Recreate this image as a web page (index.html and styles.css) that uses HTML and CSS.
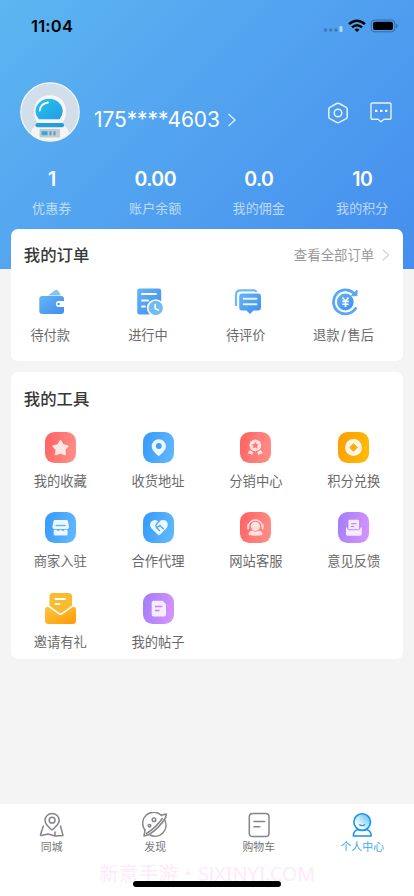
FILE: index.html
```html
<!DOCTYPE html>
<html lang="zh-CN">
<head>
<meta charset="utf-8">
<meta name="viewport" content="width=device-width, initial-scale=1">
<title>个人中心</title>
<link rel="stylesheet" href="styles.css">
</head>
<body>
<svg class="defs" width="0" height="0" aria-hidden="true">
  <defs>
    <linearGradient id="blue" x1="0" y1="0" x2="1" y2="0.25"><stop offset="0" stop-color="#349afd"/><stop offset="1" stop-color="#5cb5ff"/></linearGradient>
    <linearGradient id="red" x1="0" y1="0" x2="1" y2="0.25"><stop offset="0" stop-color="#ff6161"/><stop offset="1" stop-color="#ff8b84"/></linearGradient>
    <linearGradient id="orange" x1="0" y1="0" x2="1" y2="0.25"><stop offset="0" stop-color="#fc9d02"/><stop offset="1" stop-color="#ffb905"/></linearGradient>
    <linearGradient id="purple" x1="0" y1="0" x2="1" y2="0.25"><stop offset="0" stop-color="#a27cf8"/><stop offset="1" stop-color="#d191ff"/></linearGradient>
    <linearGradient id="mail" x1="0" y1="0" x2="1" y2="1"><stop offset="0" stop-color="#fdc745"/><stop offset="1" stop-color="#ff9a05"/></linearGradient>
    <linearGradient id="order" x1="0" y1="0" x2="1" y2="1"><stop offset="0" stop-color="#65b5f3"/><stop offset="1" stop-color="#408df0"/></linearGradient>
    <linearGradient id="visor" x1="0" y1="0" x2="1" y2="1"><stop offset="0" stop-color="#20c5ee"/><stop offset="1" stop-color="#279ce3"/></linearGradient>
    <linearGradient id="face" x1="1" y1="0" x2="0" y2="1"><stop offset="0.1" stop-color="#65c2fa"/><stop offset="0.75" stop-color="#fff"/></linearGradient>
    <clipPath id="round"><circle cx="30" cy="30" r="29"/></clipPath>
  </defs>
</svg>
<div class="screen">
  <header class="header">
    <div class="status">
      <span class="time">11:04</span>
      <svg width="76" height="16" viewBox="0 0 76 16">
        <g fill="#3f79ad"><circle cx="3.5" cy="12" r="1.7"/><circle cx="8.7" cy="12" r="1.7"/><circle cx="13.9" cy="12" r="1.7"/></g>
        <rect x="17.5" y="8" width="3" height="6" rx="1" fill="#b5dafa"/>
        <g fill="none" stroke="#000" stroke-width="2.5"><path d="M27.1 6.1Q35 -.7 42.9 6.1"/><path d="M30 9.4Q35 5.1 40 9.4"/></g>
        <path d="M32.5 11.6Q35 9.5 37.5 11.6L35 14.1Z"/>
        <rect x="49.2" y="2" width="23.6" height="11.8" rx="3.4" fill="none" stroke="#326ca6"/>
        <rect x="51" y="3.8" width="20" height="8.2" rx="2"/>
        <path d="M74 6v4q1.8-.5 1.8-2T74 6Z" fill="#326ca6"/>
      </svg>
    </div>
    <div class="profile">
      <svg class="avatar" width="60" height="60" viewBox="0 0 60 60">
        <circle cx="30" cy="30" r="29.2" fill="#d2dfea" stroke="#f5f9fc" stroke-width="1.2"/>
        <g clip-path="url(#round)">
          <path d="M11 60V52Q11 44 19 43H41Q49 44 49 52V60Z" fill="#f4f4f4"/>
          <path d="M18.500 42Q14 37 14 29.500C14 19.500 21 13.300 30 13.300S46 19.500 46 29.500Q46 37 41.500 42Z" fill="#f7f7f7"/>
          <path d="M18.800 37.300Q15.500 33.500 15.500 29.500A13.600 12.800 0 0 1 42.700 29.500Q42.700 33.500 39.500 37.300Z" fill="url(#visor)"/>
          <path d="M19.800 28.500Q20.500 21.500 28 20.500" fill="none" stroke="#fff" stroke-width="1.800" stroke-linecap="round"/>
          <rect x="15.500" y="41" width="28.500" height="4.200" rx="2" fill="#279ed8"/>
          <rect x="19.500" y="47" width="20.500" height="8.500" rx="1" fill="#c9c9cb"/>
          <path d="M21.500 49.200h6v4h-6zM29.500 49.200h2v4h-2zM33.500 49.200h2v4h-2z" fill="#35a6de"/>
        </g>
      </svg>
      <span class="phone">175****4603</span>
      <svg class="more" width="8" height="14" viewBox="0 0 8 14" fill="none" stroke="#e8f3ff" stroke-width="1.200"><path d="M.6 1 7 7 .6 13"/></svg>
      <div class="actions">
        <svg width="22" height="24" viewBox="0 0 22 24" fill="none" stroke="#e5f2ff" stroke-width="1.500" stroke-linejoin="round"><path d="M9.700 2.500Q11 1.800 12.300 2.500L19.200 6.300Q20.200 6.900 20.200 8V16Q20.200 17 19.200 17.600L12.300 21.400Q11 22.100 9.700 21.400L2.800 17.600Q1.800 17 1.800 16V8Q1.800 6.900 2.800 6.300Z"/><circle cx="11" cy="12" r="3.800"/></svg>
        <svg width="22" height="24" viewBox="0 0 22 24" fill="none" stroke="#e5f2ff" stroke-width="1.400" stroke-linejoin="round"><path d="M2.200 2H19.800Q21 2 21 3.200V17Q21 18.200 19.800 18.200H14L11 20.800 8 18.200H2.200Q1 18.200 1 17V3.200Q1 2 2.200 2Z"/><path d="M5 8.700h2.400v2.400H5zM10 8.700h2.400v2.400H10zM15 8.700h2.400v2.400H15z" fill="#f5faff" stroke="none"/></svg>
      </div>
    </div>
    <div class="stats">
      <div class="stat"><b>1</b><span>优惠券</span></div>
      <div class="stat"><b>0.00</b><span>账户余额</span></div>
      <div class="stat"><b>0.0</b><span>我的佣金</span></div>
      <div class="stat"><b>10</b><span>我的积分</span></div>
    </div>
  </header>
  <main class="cards">
    <section class="card orders">
      <div class="card-head">
        <h2>我的订单</h2>
        <a class="all">查看全部订单 <svg width="8" height="12" viewBox="0 0 8 12" fill="none" stroke="#b9b9b9" stroke-width="1"><path d="M.8.700 6.800 6 .8 11.300"/></svg></a>
      </div>
      <div class="order-grid">
        <div class="order">
          <svg width="28" height="28" viewBox="0 0 28 28"><path d="M10 7.500 17 2.300Q18.700 1.200 20 2.800L22.500 6.500V7.500Z" fill="#85c3f6"/><path d="M4.500 8H23Q26 8 26 11V13H20Q17.800 13.300 17.800 16T20 19H26V23Q26 26 23 26H4.500Q1.300 26 1.300 23V11Q1.300 8 4.500 8Z" fill="url(#order)"/><path d="M26.500 14.200H20.500Q18.500 14.200 18.500 16T20.500 17.800H26.500Z" fill="#fff"/><circle cx="20.600" cy="16" r="1.200" fill="#499bf1"/></svg>
          <span>待付款</span>
        </div>
        <div class="order">
          <svg width="28" height="28" viewBox="0 0 28 28"><rect x="1.200" y=".5" width="24" height="26" rx="2.500" fill="url(#order)"/><path d="M6 6H20M6 12.500H12M6 18.500H9" stroke="#fff" stroke-width="1.800" stroke-linecap="round"/><circle cx="19.700" cy="20" r="8.800" fill="#fff"/><circle cx="19.700" cy="20" r="7.200" fill="#70bcf6"/><path d="M19.200 16.500V20.700L22.500 22" fill="none" stroke="#fff" stroke-width="1.600" stroke-linecap="round"/></svg>
          <span>进行中</span>
        </div>
        <div class="order">
          <svg width="28" height="28" viewBox="0 0 28 28"><path d="M2 18V7Q2 2.300 7 2.300H20Q22 2.500 22.500 4" fill="none" stroke="#6cb9f4" stroke-width="2.200"/><path d="M8 5.500H24Q27 5.500 27 8.500V19.500Q27 22.500 24 22.500H19.500L16 26 12.500 22.500H8Q5.200 22.500 5.200 19.500V8.500Q5.200 5.500 8 5.500Z" fill="url(#order)"/><path d="M9.700 10.700H22.500M9.700 16.300H22.500" stroke="#e5f3ff" stroke-width="1.900" stroke-linecap="round"/></svg>
          <span>待评价</span>
        </div>
        <div class="order">
          <svg width="28" height="28" viewBox="0 0 28 28"><path d="M24.500 20.500A12 12 0 1 1 22.500 5" fill="none" stroke="#55a9f3" stroke-width="2.800" stroke-linecap="round"/><path d="M20.500 7.700H26V2Z" fill="#55a9f3" stroke="#55a9f3" stroke-linejoin="round"/><circle cx="14.300" cy="14" r="8.400" fill="url(#order)"/><path d="M11.500 9.500 14.500 13 17.500 9.500M14.500 13V19M11.300 13.400H17.700M11.300 16.200H17.700" fill="none" stroke="#fff" stroke-width="1.600"/></svg>
          <span class="slashed">退款 / 售后</span>
        </div>
      </div>
    </section>
    <section class="card tools">
      <h2>我的工具</h2>
      <div class="tool-grid">
        <div class="tool"><svg width="31" height="31" viewBox="0 0 31 31"><rect width="31" height="31" rx="9.500" fill="url(#red)"/><path d="M15.500 9 17.900 13.200 22.600 14.200 19.400 17.700 20 22.300 15.500 20.500 11 22.300 11.600 17.700 8.400 14.200 13.100 13.200Z" fill="#ffe7e4" stroke="#ffe7e4" stroke-width="2" stroke-linejoin="round"/></svg><span>我的收藏</span></div>
        <div class="tool"><svg width="31" height="31" viewBox="0 0 31 31"><rect width="31" height="31" rx="9.500" fill="url(#blue)"/><path d="M16.900 23.300Q15.800 24.500 14.700 23.300C10.500 19.500 8.700 17.300 8.700 14.300A7.100 7.100 0 0 1 22.900 14.300C22.900 17.300 21 19.500 16.900 23.300Z" fill="#edf7ff"/><circle cx="15.800" cy="14" r="2.900" fill="#449ff7"/></svg><span>收货地址</span></div>
        <div class="tool"><svg width="31" height="31" viewBox="0 0 31 31"><rect width="31" height="31" rx="9.500" fill="url(#red)"/><circle cx="15.300" cy="13.300" r="5.900" fill="#ffe3e1"/><path d="M15.300 10.500 16.300 12.300 18.300 12.700 16.900 14.100 17.200 16.100 15.300 15.300 13.400 16.100 13.700 14.100 12.300 12.700 14.300 12.300Z" fill="#ff7774" stroke="#ff7774" stroke-width=".6"/><path d="M9.800 18 13.300 20.300 12 23.300 10.700 21.900 7.700 21.300ZM20.800 18 17.300 20.300 18.600 23.300 19.900 21.900 22.900 21.300Z" fill="#ffe3e1"/></svg><span>分销中心</span></div>
        <div class="tool"><svg width="31" height="31" viewBox="0 0 31 31"><rect width="31" height="31" rx="9.500" fill="url(#orange)"/><circle cx="15.500" cy="15.500" r="8.500" fill="#fff5e5"/><path d="M15.500 11.700 19.300 15.500 15.500 19.300 11.700 15.500Z" fill="#fdad0d" stroke="#fdad0d" stroke-linejoin="round"/></svg><span>积分兑换</span></div>
        <div class="tool"><svg width="31" height="31" viewBox="0 0 31 31"><rect width="31" height="31" rx="9.500" fill="url(#blue)"/><path d="M10 8H21.500Q22.700 8 23 9.200L24 15Q24 16.500 22.500 17H8.800Q7.200 16.500 7.400 15L8.500 9.200Q8.800 8 10 8Z" fill="#edf7ff"/><path d="M10.500 13.500H20.800" stroke="#62b4fb" stroke-width="1.300"/><path d="M8.500 18 11 17.200 13.200 18.800 15.700 17.300 18 18.800 20.400 17.200 22.900 18V22.300Q22.900 23.700 21.500 23.700H9.900Q8.500 23.700 8.500 22.300Z" fill="#edf7ff" stroke="#55a8f8" stroke-width=".5"/></svg><span>商家入驻</span></div>
        <div class="tool"><svg width="31" height="31" viewBox="0 0 31 31"><rect width="31" height="31" rx="9.500" fill="url(#blue)"/><path d="M15.800 9.800Q12.500 7 9.500 8.700C6.300 10.700 6.500 14.500 9 17L15.200 23Q16 23.700 16.800 23L22.700 17C26 13.800 25.200 9.300 21.700 8.200Q18 7.200 15.800 9.800Z" fill="#edf7ff"/><path d="M16.300 9 13.300 12.300Q12.200 14 13.700 14.800 15.500 15.300 17 13.500L20.800 17.200M13 15.200 17 19" fill="none" stroke="#4da6fa" stroke-width="1.300"/></svg><span>合作代理</span></div>
        <div class="tool"><svg width="31" height="31" viewBox="0 0 31 31"><rect width="31" height="31" rx="9.500" fill="url(#red)"/><path d="M8.400 15V14.500A7 6.500 0 0 1 22.400 14.500V15" fill="none" stroke="#ffe2e0" stroke-width="1.400"/><path d="M8.200 13v3.500M22.600 13v3.500" stroke="#ffe2e0" stroke-width="1.900" stroke-linecap="round"/><circle cx="15.400" cy="14.300" r="4.600" fill="#ffe2e0"/><path d="M8.500 23Q8.500 19 12 18.500 15.500 20.800 19 18.500 22.500 19 22.500 23Q15.500 24.500 8.500 23Z" fill="#ffe2e0"/></svg><span>网站客服</span></div>
        <div class="tool"><svg width="31" height="31" viewBox="0 0 31 31"><rect width="31" height="31" rx="9.500" fill="url(#purple)"/><path d="M8 14.300Q8 15 9 16L10.500 18.300H21L22.500 16Q23.800 15 23.800 14.500V22Q23.800 23.700 22.200 23.700H9.700Q8 23.700 8 22Z" fill="#f5eaff"/><path d="M11.300 7.800H20Q21 7.800 21 8.800V17.300H10.400V8.800Q10.400 7.800 11.300 7.800Z" fill="#f5eaff"/><path d="M13 11.800H18.500M13 14.500H16.200" stroke="#b27bf8" stroke-width="1.100"/></svg><span>意见反馈</span></div>
        <div class="tool"><svg width="31" height="31" viewBox="0 0 31 31"><path d="M7.500 0H23.500Q27 0 27 3.500V14L17 20.500Q15.500 21.500 14 20.500L4.500 14V3.500Q4.500 0 7.500 0Z" fill="#fabb30"/><path d="M3 13.500 14 21.500Q15.500 22.500 17 21.500L28.300 13.500Q31 14 31 16.500V27.500Q31 31 27.500 31H3.500Q0 31 0 27.500V16.500Q0 14 3 13.500Z" fill="url(#mail)"/><path d="M3 12.700 14 20.500Q15.500 21.500 17 20.500L28.300 12.700" fill="none" stroke="#fff" stroke-width="1.500"/><path d="M10.500 6H20M10.500 11H14.500" stroke="#fff" stroke-width="1.900" stroke-linecap="round"/></svg><span>邀请有礼</span></div>
        <div class="tool"><svg width="31" height="31" viewBox="0 0 31 31"><rect width="31" height="31" rx="9.500" fill="url(#purple)"/><path d="M10.300 7.700H19.500L23 11.200V21.500Q23 23.500 21 23.500H10.300Q8.700 23.500 8.700 21.500V9.700Q8.700 7.700 10.300 7.700Z" fill="#f7ebff"/><path d="M12 13.500H19.300M12 17.500H16.500" stroke="#bd85fa" stroke-width="1.400"/></svg><span>我的帖子</span></div>
      </div>
    </section>
  </main>
  <nav class="tabbar">
    <div class="tab"><svg width="26" height="26" viewBox="0 0 26 26" fill="none" stroke="#85858a" stroke-width="1.500" stroke-linejoin="round" stroke-linecap="round"><path d="M13 18C8 14 6 11.500 6 8.500A7.100 7.100 0 0 1 20.200 8.500C20.200 11.500 18 14 13 18Z"/><circle cx="13.100" cy="8.200" r="2.900"/><path d="M4.300 14 1.500 22.500Q1.300 23.500 2.300 23.500L9 22 16 24 24 23.600 21.500 14M16 20V24"/></svg><span>同城</span></div>
    <div class="tab"><svg width="26" height="26" viewBox="0 0 26 26" fill="none" stroke="#85858a" stroke-width="1.500" stroke-linejoin="round" stroke-linecap="round"><path d="M3 18A11 11 0 0 1 19.500 3.500M22.700 8A11 11 0 0 1 8 23"/><path d="M20 3 24.300 2 23.700 5.500Q17 16.500 6.500 22.800L2 24 3 18M20.300 6.500Q14 15.500 4.500 21.500"/><circle cx="12" cy="7.800" r="1.800"/><circle cx="7.500" cy="13.700" r="1.300"/></svg><span>发现</span></div>
    <div class="tab"><svg width="26" height="26" viewBox="0 0 26 26" fill="none" stroke="#85858a" stroke-width="1.500" stroke-linecap="round"><rect x="3.300" y="1.500" width="19.700" height="23" rx="3.300"/><path d="M8 9.500H18.500M8 14.700H13.800"/></svg><span>购物车</span></div>
    <div class="tab active"><svg width="26" height="26" viewBox="0 0 26 26" fill="none" stroke="#1295ed" stroke-width="1.600" stroke-linejoin="round" stroke-linecap="round"><path d="M4.300 24Q4.500 18.500 9 17.500 13 19.500 17.500 17.500 22 18.500 22.200 24Z" fill="#fff"/><circle cx="13.200" cy="10" r="8.300" fill="url(#face)"/><path d="M10.500 12.800Q13.200 14.700 15.700 12.800" stroke-width="1.200"/></svg><span>个人中心</span></div>
    <div class="watermark">新意手游・SJXINYI.COM</div>
    <div class="home-bar"></div>
  </nav>
</div>
</body>
</html>
```
FILE: styles.css
```css
* { box-sizing: border-box; }
body {
  margin: 0;
  background: #f4f4f4;
  font-family: Inter, "Noto Sans CJK SC", sans-serif;
  color: #6a6a6a;
}
svg { display: block; flex: none; }
.defs { position: absolute; }
.screen { height: 896px; display: flex; flex-direction: column; overflow: hidden; }

.header {
  height: 269px;
  flex: none;
  background: linear-gradient(135deg, #5cb6f0 0%, #53a5f0 40%, #458eee 100%);
  color: #fff;
}
.status {
  height: 52px;
  padding: 0 16px 0 31px;
  display: flex;
  align-items: center;
  justify-content: space-between;
  color: #000;
}
.time { font-size: 16.500px; font-weight: 600; line-height: 20px; letter-spacing: .2px; }
.profile { height: 91px; padding: 30px 22px 0 20px; display: flex; align-items: flex-start; }
.phone { margin: 24px 0 0 14px; font-size: 21px; line-height: 28px; letter-spacing: -.1px; width: 127px; white-space: nowrap; }
.more { margin: 31px 0 0 6.500px; }
.actions { margin: 19px 0 0 auto; display: flex; gap: 21px; }
.stats { margin-top: 22px; display: grid; grid-template-columns: repeat(4, 1fr); }
.stat { display: flex; flex-direction: column; align-items: center; }
.stat b { font-size: 19.500px; font-weight: 600; line-height: 28px; letter-spacing: -.6px; }
.stat span { margin-top: 5px; font-size: 13px; line-height: 20px; letter-spacing: .1px; opacity: .62; }

.cards {
  flex: 1;
  margin-top: -40.500px;
  padding: 0 11.300px;
  display: flex;
  flex-direction: column;
  gap: 11.500px;
}
.card { background: #fff; border-radius: 7px; }
h2 { margin: 0; font-size: 16.400px; font-weight: 500; line-height: 24px; color: #383838; }
.orders { height: 132px; padding-top: 14px; }
.card-head { display: flex; justify-content: space-between; padding: 0 12.500px; }
.all { display: flex; align-items: center; gap: 8px; font-size: 13.400px; line-height: 24px; color: #999; }
.order-grid { display: grid; grid-template-columns: repeat(4, 1fr); margin: 21px 10px 0 -10px; width: 391px; }
.order { display: flex; flex-direction: column; align-items: center; }
.order svg { margin-left: 4px; }
.order span { margin-top: 9px; font-size: 13.200px; line-height: 20px; white-space: nowrap; }
.order .slashed { word-spacing: -2px; }

.tools { height: 287px; padding-top: 14.500px; }
.tools h2 { padding-left: 12.500px; }
.tool-grid { display: grid; grid-template-columns: repeat(4, 1fr); grid-auto-rows: 80.500px; margin-top: 21px; }
.tool { display: flex; flex-direction: column; align-items: center; }
.tool span { margin-top: 8px; font-size: 13.300px; line-height: 20px; white-space: nowrap; }

.tabbar {
  position: relative;
  height: 92px;
  flex: none;
  padding-top: 8px;
  display: grid;
  grid-template-columns: repeat(4, 1fr);
  background: #fff;
}
.tab { display: flex; flex-direction: column; align-items: center; }
.tab span { margin-top: 1px; font-size: 10.900px; line-height: 16px; color: #777; }
.active span { color: #3ba8f4; }
.watermark {
  position: absolute;
  top: 58px;
  left: 99px;
  font: 19.800px/24px "Noto Sans", "Noto Sans CJK SC", sans-serif;
  white-space: nowrap;
  color: #fdeafb;
}
.home-bar {
  position: absolute;
  top: 77px;
  left: 133px;
  width: 148px;
  height: 6px;
  border-radius: 3px;
  background: #000;
}
```
